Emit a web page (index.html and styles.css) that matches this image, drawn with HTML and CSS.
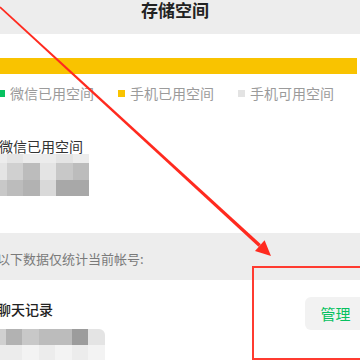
FILE: index.html
```html
<!DOCTYPE html>
<html lang="zh-CN">
<head>
  <meta charset="UTF-8">
  <meta name="viewport" content="width=device-width, initial-scale=1.0">
  <title>存储空间</title>
  <link rel="stylesheet" href="styles.css">
</head>
<body>
  <div class="page">
    <div class="header">
      <h1>存储空间</h1>
    </div>

    <div class="usage">
      <div class="bar"></div>
      <div class="legend">
        <span class="legend-item"><i class="dot green"></i>微信已用空间</span>
        <span class="legend-item"><i class="dot yellow"></i>手机已用空间</span>
        <span class="legend-item"><i class="dot grey"></i>手机可用空间</span>
      </div>
      <p class="usage-title">微信已用空间</p>
      <div class="mosaic mosaic-top">
        <i class="s1"></i><i class="s2"></i><i class="s1"></i><i class="s1"></i><i class="s2"></i><i class="s1"></i>
        <i class="s2"></i><i class="s4"></i><i class="s6"></i><i class="s2"></i><i class="s5"></i><i class="s6"></i>
        <i class="s5"></i><i class="s6"></i><i class="s7"></i><i class="s3"></i><i class="s8"></i><i class="s8"></i>
      </div>
    </div>

    <div class="notice">以下数据仅统计当前帐号:</div>

    <div class="item">
      <div class="item-info">
        <p class="item-title">聊天记录</p>
        <div class="mosaic mosaic-chat">
          <i class="s4"></i><i class="s7"></i><i class="s5"></i><i class="s6"></i><i class="s6"></i><i class="s9"></i><i class="s2 corner"></i>
          <i class="s1"></i><i class="s1"></i><i class="s0"></i><i class="s1"></i><i class="s0"></i><i class="s1"></i><i class="s0"></i>
        </div>
      </div>
      <button class="manage">管理</button>
    </div>
  </div>

  <!-- 标注 -->
  <div class="mark-box"></div>
  <svg class="mark-arrow" viewBox="0 0 360 360" xmlns="http://www.w3.org/2000/svg">
    <polygon points="-0.6,7.6 0.6,6.4 260.9,244.2 258.5,246.8" fill="#ff2a1f"/>
    <polygon points="255,251 264.6,240.2 271,256" fill="#ff2a1f"/>
  </svg>
</body>
</html>
```

FILE: styles.css
```css
body {
  margin: 0;
  padding: 0;
  width: 360px;
  height: 360px;
  overflow: hidden;
  position: relative;
  background-color: #fff;
  font-family: "Noto Sans CJK SC", "Noto Sans", sans-serif;
}
.page {
  margin-left: -16px;
  width: 382px;
}
.header {
  height: 34px;
  background-color: #ededed;
  text-align: center;
}
.header h1 {
  margin: 0;
  font-size: 17px;
  line-height: 20px;
  font-weight: bold;
  color: #222;
}
.usage {
  padding: 24px 9px 37px 14px;
}
.bar {
  height: 16px;
  background-color: #f9c300;
}
.legend {
  display: flex;
  gap: 24px;
  margin-top: 9px;
  line-height: 20px;
  font-size: 14px;
  color: #9b9b9b;
}
.legend-item {
  display: flex;
  align-items: center;
}
.dot {
  width: 7px;
  height: 7px;
  margin-right: 5px;
}
.green { background-color: #07c160; }
.yellow { background-color: #f9c300; }
.grey { background-color: #e3e3e3; }
.usage-title {
  margin: 35px 0 0 1px;
  font-size: 14px;
  line-height: 16px;
  color: #333;
}
.mosaic {
  display: grid;
  margin-left: -8px;
}
.mosaic-top {
  grid-template-columns: repeat(6, 16.5px);
  grid-template-rows: 9px 17px 16px;
}
.mosaic-chat {
  grid-template-columns: repeat(7, 16.5px);
  grid-template-rows: 16px 16px;
}
.corner { border-top-right-radius: 6px; }
.s0 { background-color: #f3f3f3; }
.s1 { background-color: #ececec; }
.s2 { background-color: #e4e4e4; }
.s3 { background-color: #d9d9d9; }
.s4 { background-color: #d0d0d0; }
.s5 { background-color: #c8c8c8; }
.s6 { background-color: #bcbcbc; }
.s7 { background-color: #b2b2b2; }
.s8 { background-color: #a8a8a8; }
.s9 { background-color: #9c9c9c; }
.notice {
  height: 47px;
  box-sizing: border-box;
  padding: 16px 0 0 13px;
  background-color: #ededed;
  font-size: 13px;
  line-height: 20px;
  color: #7a7a7a;
}
.item {
  display: flex;
  justify-content: space-between;
  padding-left: 13px;
}
.item-title {
  margin: 19px 0 10px 0;
  font-size: 14px;
  line-height: 20px;
  font-weight: 500;
  color: #222;
}
.manage {
  margin-top: 17px;
  width: 61px;
  height: 33px;
  padding: 0;
  border: none;
  border-radius: 6px;
  background-color: #f2f2f2;
  color: #07c160;
  font-family: inherit;
  font-size: 15px;
}
.mark-box {
  position: absolute;
  left: 252px;
  top: 266px;
  width: 120px;
  height: 90px;
  border: 2px solid #ff3b30;
}
.mark-arrow {
  position: absolute;
  left: 0;
  top: 0;
  width: 360px;
  height: 360px;
}
```
